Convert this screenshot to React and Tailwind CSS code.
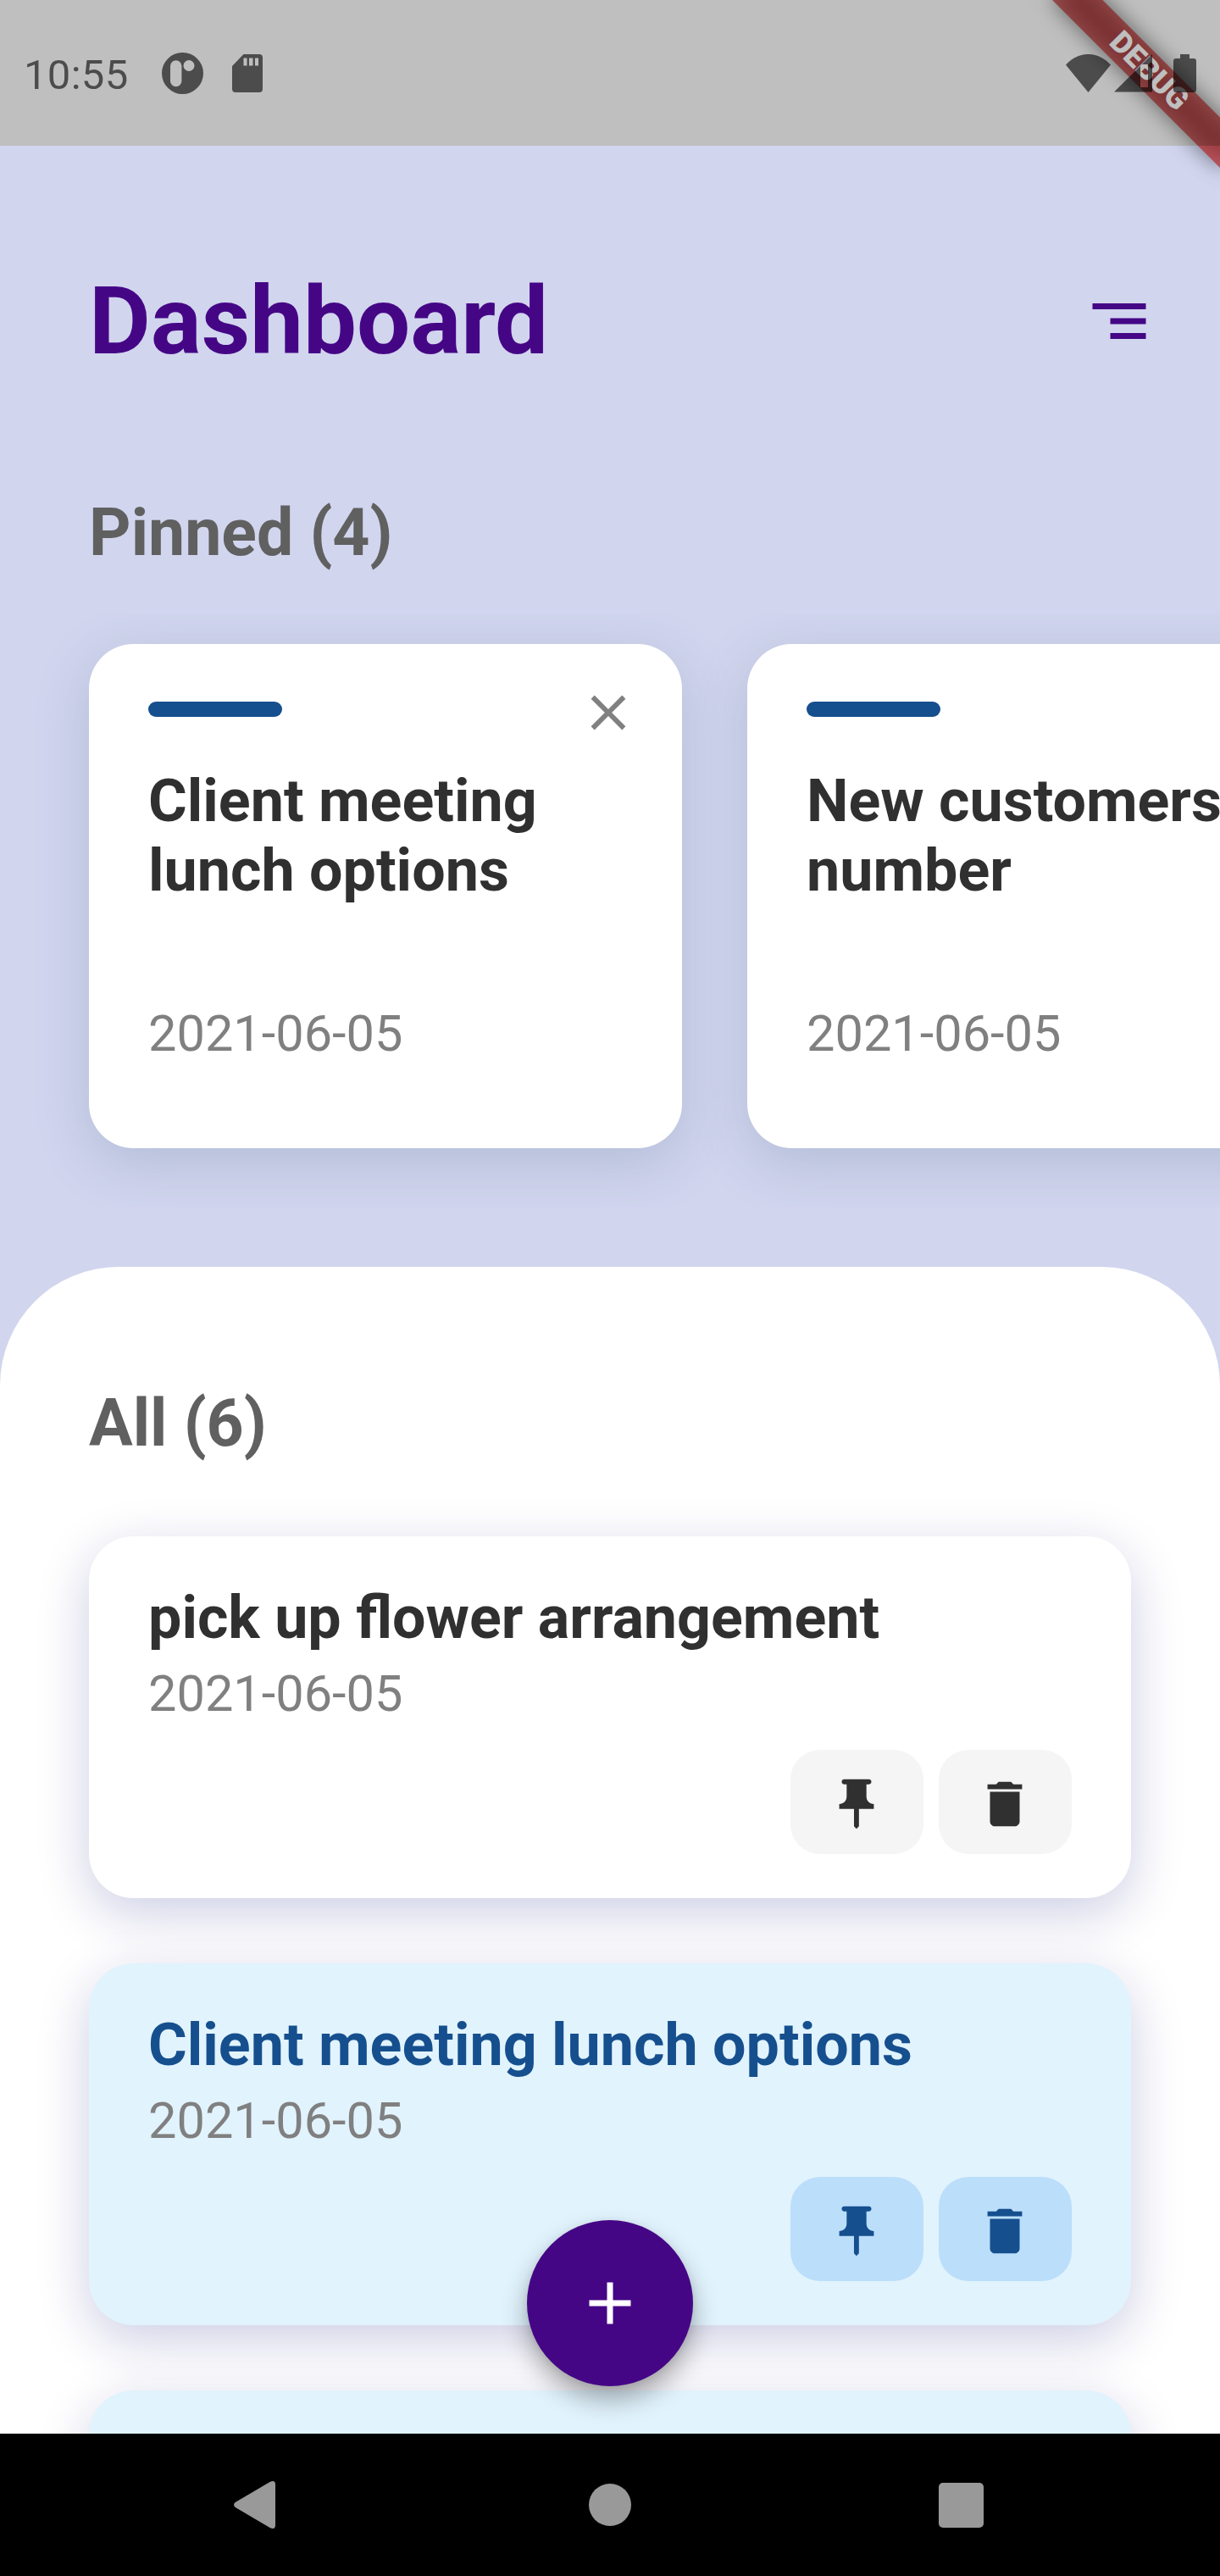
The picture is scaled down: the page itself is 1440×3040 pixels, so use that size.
import React from "react";

const notes = [
  { title: "pick up flower arrangement", date: "2021-06-05", pinned: false },
  { title: "Client meeting lunch options", date: "2021-06-05", pinned: true },
];

const pinnedNotes = [
  { lines: ["Client meeting", "lunch options"], date: "2021-06-05" },
  { lines: ["New customers", "number"], date: "2021-06-05" },
];

function PinIcon() {
  return (
    <svg className="mt-[4.5px] size-[70px]" viewBox="0 0 24 24" fill="currentColor">
      <path d="M16 9V4h1c.55 0 1-.45 1-1s-.45-1-1-1H7c-.55 0-1 .45-1 1s.45 1 1 1h1v5c0 1.66-1.34 3-3 3v2h5.97v7l1 1 1-1v-7H19v-2c-1.66 0-3-1.34-3-3z" />
    </svg>
  );
}

function TrashIcon() {
  return (
    <svg className="mt-[4.5px] size-[70px]" viewBox="0 0 24 24" fill="currentColor">
      <path d="M6 19c0 1.1.9 2 2 2h8c1.1 0 2-.9 2-2V7H6v12zM19 4h-3.5l-1-1h-5l-1 1H5v2h14V4z" />
    </svg>
  );
}

function DebugBanner() {
  return (
    <div className="absolute top-0 right-0 size-[260px] overflow-hidden">
      <div className="absolute top-0 left-full h-0 w-0 origin-top-left rotate-45">
        <div className="absolute top-[98px] -left-[140px] h-[42px] w-[280px] bg-black/50 blur-[12.6px]" />
        <div className="absolute top-[98px] -left-[140px] flex h-[42px] w-[280px] items-center justify-center bg-[#b71c1c]/[0.63] text-[35.7px] leading-none font-black text-white">
          DEBUG
        </div>
      </div>
    </div>
  );
}

function StatusBar() {
  return (
    <header className="absolute inset-x-0 top-0 flex h-[172px] items-center justify-between bg-black/25 text-black/60">
      <div className="flex items-center pl-[28px]">
        <span className="mt-[5px] w-[126px] text-[49px] leading-[58px] tracking-[0.3px]">10:55</span>
        <svg className="ml-[37px] size-[49px]" viewBox="0 0 49 49" fill="currentColor" fillRule="evenodd">
          <path d="M24.5 0a24.5 24.5 0 1 1 0 49a24.5 24.5 0 0 1 0-49zM10 16v17.500a6.700 6.700 0 0 0 13.400 0V16a6.700 6.700 0 0 0-13.400 0zM32 9a6.500 6.500 0 1 0 0 13a6.500 6.500 0 0 0 0-13z" />
        </svg>
        <svg className="ml-[34px] h-[45px] w-[36px]" viewBox="0 0 36 45" fill="currentColor" fillRule="evenodd">
          <path d="M13.500 0H32a4 4 0 0 1 4 4v37a4 4 0 0 1-4 4H4a4 4 0 0 1-4-4V14zM13.500 4.500v9h4v-9zM20 4.500v9h4.500v-9zM27 4.500v9h4v-9z" />
        </svg>
      </div>
      <div className="flex items-center pr-[28px]">
        <svg className="h-[45px] w-[53px]" viewBox="0 0 53 45" fill="currentColor">
          <path d="M0 12.500C15-4.200 38-4.200 53 12.500L26.500 45z" />
        </svg>
        <svg className="ml-[4px] h-[45px] w-[45px]" viewBox="0 0 45 45" fill="currentColor" fillRule="evenodd">
          <path d="M45 0v44.500H0zM31 14v25h9V12h-7z" />
        </svg>
        <svg className="ml-[25px] h-[45px] w-[27px]" viewBox="0 0 27 45" fill="currentColor">
          <path d="M8 0h11v5h5a3 3 0 0 1 3 3v34a3 3 0 0 1-3 3H3a3 3 0 0 1-3-3V8a3 3 0 0 1 3-3h5z" />
        </svg>
      </div>
    </header>
  );
}

function PinnedCard({ lines, date, closable }) {
  return (
    <article className="h-[595px] w-[700px] shrink-0 rounded-[52.5px] bg-white px-[70px] pt-[66px] shadow-[0_17.5px_63px_rgba(72,100,130,0.21)]">
      <div className="flex h-[79px] justify-between">
        <div className="mt-[2px] h-[17.5px] w-[157.5px] rounded-full bg-[#164f8e]" />
        {closable && (
          <svg className="-mt-[20px] -mr-[17.5px] size-[70px] text-[#808080]" viewBox="0 0 24 24" fill="currentColor">
            <path d="M19 6.410L17.590 5 12 10.590 6.410 5 5 6.410 10.590 12 5 17.590 6.410 19 12 13.410 17.590 19 19 17.590 13.410 12z" />
          </svg>
        )}
      </div>
      <h3 className="h-[228px] text-[70px] leading-[81.500px] font-bold whitespace-nowrap text-[#303030]">
        {lines.map((line) => (
          <div key={line}>{line}</div>
        ))}
      </h3>
      <p className="mt-[52px] text-[59.500px] leading-[70px] text-[#808080]">{date}</p>
    </article>
  );
}

function NoteCard({ title, date, pinned }) {
  const button = "flex h-[122.5px] w-[157.5px] items-center justify-center rounded-[35px]";
  const tone = pinned ? "bg-[#bbdefb] text-[#164f8e]" : "bg-[#f5f5f5] text-[#303030]";
  return (
    <article
      className={`flex h-[427px] shrink-0 flex-col rounded-[52.5px] px-[70px] pt-[54.5px] shadow-[0_17.5px_63px_rgba(5,10,120,0.2)] ${pinned ? "bg-[#e1f3fd]" : "bg-white"}`}
    >
      <h3 className={`text-[70px] leading-[82px] font-bold whitespace-nowrap ${pinned ? "text-[#164f8e]" : "text-[#303030]"}`}>
        {title}
      </h3>
      <p className="mt-[14.500px] text-[59.500px] leading-[70px] text-[#808080]">{date}</p>
      <div className="mt-[31px] flex justify-end gap-[17.5px]">
        <button className={`${button} ${tone}`} aria-label="Pin"><PinIcon /></button>
        <button className={`${button} ${tone}`} aria-label="Delete"><TrashIcon /></button>
      </div>
    </article>
  );
}

function NavBar() {
  return (
    <nav className="relative flex h-[168px] items-center bg-black pl-[276px] text-[#999999]">
      <svg className="h-[56px] w-[49px]" viewBox="0 0 49 56" fill="currentColor">
        <path d="M1.800 25L43 .8Q49-1.500 49 4v48Q49 57.500 43 55.200L1.800 31Q-1.800 28 1.800 25z" />
      </svg>
      <div className="ml-[370px] size-[50px] rounded-full bg-[#999999]" />
      <div className="ml-[363px] size-[53px] rounded-[5px] bg-[#999999]" />
    </nav>
  );
}

export default function App() {
  return (
    <div className="relative flex h-[3040px] w-[1440px] flex-col overflow-hidden bg-white font-[Roboto,sans-serif]">
      <main className="relative mt-[172px] flex h-[2700px] flex-col overflow-hidden bg-[#d1d5ee]">
        <div className="flex h-[399px] items-start justify-between pt-[141px] pr-[77px] pl-[105px]">
          <h1 className="text-[112px] leading-[132px] font-bold text-[#450686]">Dashboard</h1>
          <svg className="mt-[24px] size-[84px]" viewBox="0 0 24 24" fill="#450686">
            <path d="M3 6h18v2H3zM9 11h12v2H9zM9 16h12v2H9z" />
          </svg>
        </div>
        <h2 className="mt-[13px] pl-[105px] text-[77px] leading-[90px] font-bold text-[#606060]">Pinned (4)</h2>
        <section className="mt-[51px] flex h-[700px] shrink-0 gap-[77px] overflow-hidden pt-[35px] pl-[105px]">
          {pinnedNotes.map((note, i) => (
            <PinnedCard key={note.lines[0]} {...note} closable={i === 0} />
          ))}
        </section>
        <section className="mt-[70px] flex h-[1377px] shrink-0 flex-col overflow-hidden rounded-t-[140px] bg-white px-[105px] pt-[140px]">
          <h2 className="text-[77px] leading-[90px] font-bold text-[#606060]">All (6)</h2>
          <div className="mt-[88.300px] flex flex-col gap-[77px]">
            {notes.map((note) => (
              <NoteCard key={note.title} {...note} />
            ))}
            <div className="h-[427px] shrink-0 rounded-[52.5px] bg-[#e1f3fd] shadow-[0_17.5px_63px_rgba(5,10,120,0.2)]" />
          </div>
        </section>
        <button
          aria-label="Add"
          className="absolute bottom-[56px] left-[622px] flex size-[196px] items-center justify-center rounded-full bg-[#450686] text-white shadow-[0_16px_30px_rgba(0,0,0,0.32),0_2px_10px_rgba(0,0,0,0.08)]"
        >
          <svg className="size-[84px]" viewBox="0 0 24 24" fill="currentColor">
            <path d="M19 13h-6v6h-2v-6H5v-2h6V5h2v6h6v2z" />
          </svg>
        </button>
      </main>
      <NavBar />
      <DebugBanner />
      <StatusBar />
    </div>
  );
}
